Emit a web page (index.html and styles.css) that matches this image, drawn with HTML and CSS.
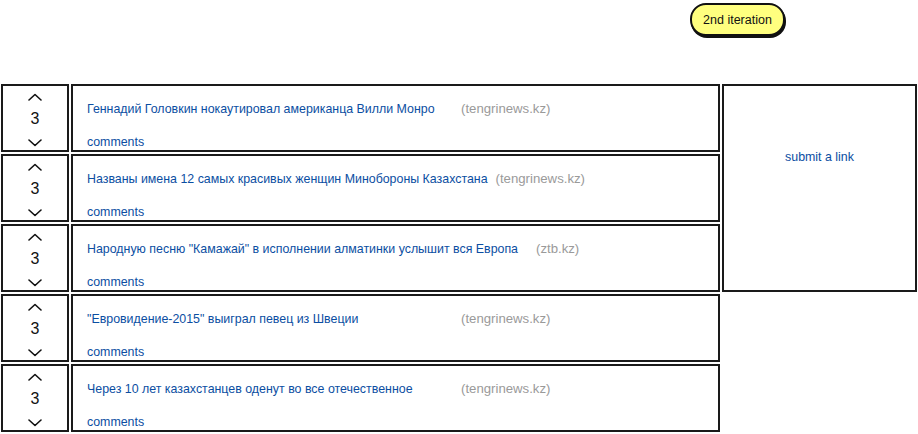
FILE: index.html
```html
<!DOCTYPE html>
<html>
<head>
<meta charset="utf-8">
<link rel="stylesheet" href="styles.css">
</head>
<body>
<header class="top">
  <div class="badge">2nd iteration</div>
</header>
<main class="layout">
  <section class="list">
    <article class="row">
      <div class="vote"><svg class="caret" viewBox="0 0 14 8"><polyline points="1,7 7,1.5 13,7"/></svg><span class="score">3</span><svg class="caret down" viewBox="0 0 14 8"><polyline points="1,1 7,6.5 13,1"/></svg></div>
      <div class="item">
        <div class="line"><a class="title">Геннадий Головкин нокаутировал американца Вилли Монро</a><span class="source">(tengrinews.kz)</span></div>
        <a class="comments">comments</a>
      </div>
    </article>
    <article class="row">
      <div class="vote"><svg class="caret" viewBox="0 0 14 8"><polyline points="1,7 7,1.5 13,7"/></svg><span class="score">3</span><svg class="caret down" viewBox="0 0 14 8"><polyline points="1,1 7,6.5 13,1"/></svg></div>
      <div class="item">
        <div class="line"><a class="title">Названы имена 12 самых красивых женщин Минобороны Казахстана</a><span class="source">(tengrinews.kz)</span></div>
        <a class="comments">comments</a>
      </div>
    </article>
    <article class="row">
      <div class="vote"><svg class="caret" viewBox="0 0 14 8"><polyline points="1,7 7,1.5 13,7"/></svg><span class="score">3</span><svg class="caret down" viewBox="0 0 14 8"><polyline points="1,1 7,6.5 13,1"/></svg></div>
      <div class="item">
        <div class="line"><a class="title">Народную песню "Камажай" в исполнении алматинки услышит вся Европа</a><span class="source wide">(ztb.kz)</span></div>
        <a class="comments">comments</a>
      </div>
    </article>
    <article class="row">
      <div class="vote"><svg class="caret" viewBox="0 0 14 8"><polyline points="1,7 7,1.5 13,7"/></svg><span class="score">3</span><svg class="caret down" viewBox="0 0 14 8"><polyline points="1,1 7,6.5 13,1"/></svg></div>
      <div class="item">
        <div class="line"><a class="title">"Евровидение-2015" выиграл певец из Швеции</a><span class="source">(tengrinews.kz)</span></div>
        <a class="comments">comments</a>
      </div>
    </article>
    <article class="row">
      <div class="vote"><svg class="caret" viewBox="0 0 14 8"><polyline points="1,7 7,1.5 13,7"/></svg><span class="score">3</span><svg class="caret down" viewBox="0 0 14 8"><polyline points="1,1 7,6.5 13,1"/></svg></div>
      <div class="item">
        <div class="line"><a class="title">Через 10 лет казахстанцев оденут во все отечественное</a><span class="source">(tengrinews.kz)</span></div>
        <a class="comments">comments</a>
      </div>
    </article>
  </section>
  <aside class="side">
    <a class="submit">submit a link</a>
  </aside>
</main>
</body>
</html>
```
FILE: styles.css
```css
html, body {
  margin: 0;
  padding: 0;
  background: #fff;
}
body {
  font-family: "Liberation Sans", Arial, sans-serif;
  font-size: 12.4px;
  color: #111;
}
.top {
  height: 84px;
  box-sizing: border-box;
  padding: 3px 0 0 690px;
}
.badge {
  width: 95px;
  height: 33px;
  box-sizing: border-box;
  border: 2px solid #111;
  border-radius: 16px;
  background: #ffff7f;
  display: flex;
  align-items: center;
  justify-content: center;
  font-size: 12.5px;
  color: #111;
  box-shadow: 1px 2px 0 #111;
}
.layout {
  display: flex;
  gap: 2px;
  padding-left: 1px;
}
.list {
  display: flex;
  flex-direction: column;
  gap: 2px;
  width: 719px;
}
.row {
  display: flex;
  gap: 2px;
  height: 68px;
}
.vote {
  width: 68px;
  box-sizing: border-box;
  border: 2px solid #1a1a1a;
  display: flex;
  flex-direction: column;
  align-items: center;
  padding-top: 7px;
}
.caret {
  display: block;
  flex: none;
  width: 14px;
  height: 8px;
  fill: none;
  stroke: #111;
  stroke-width: 1.6;
  stroke-linecap: round;
  stroke-linejoin: round;
}
.caret.down {
  margin-top: 11px;
}
.score {
  display: block;
  font-size: 16px;
  line-height: 18px;
  height: 18px;
  margin-top: 9px;
  color: #111;
}
.item {
  flex: 1;
  box-sizing: border-box;
  border: 2px solid #1a1a1a;
  padding: 15px 0 0 14px;
  display: flex;
  flex-direction: column;
}
.line {
  display: flex;
  align-items: baseline;
  height: 16px;
}
.title {
  color: #0b4ea2;
  min-width: 366px;
  margin-right: 8px;
}
.source {
  color: #9a9a9a;
  font-size: 13.2px;
}
.source.wide {
  margin-left: 10px;
}
.comments {
  color: #0b4ea2;
  margin-top: 18px;
}
.side {
  width: 195px;
  height: 208px;
  box-sizing: border-box;
  border: 2px solid #1a1a1a;
  display: flex;
  justify-content: center;
  padding-top: 64px;
}
.submit {
  color: #0b4ea2;
}
```
